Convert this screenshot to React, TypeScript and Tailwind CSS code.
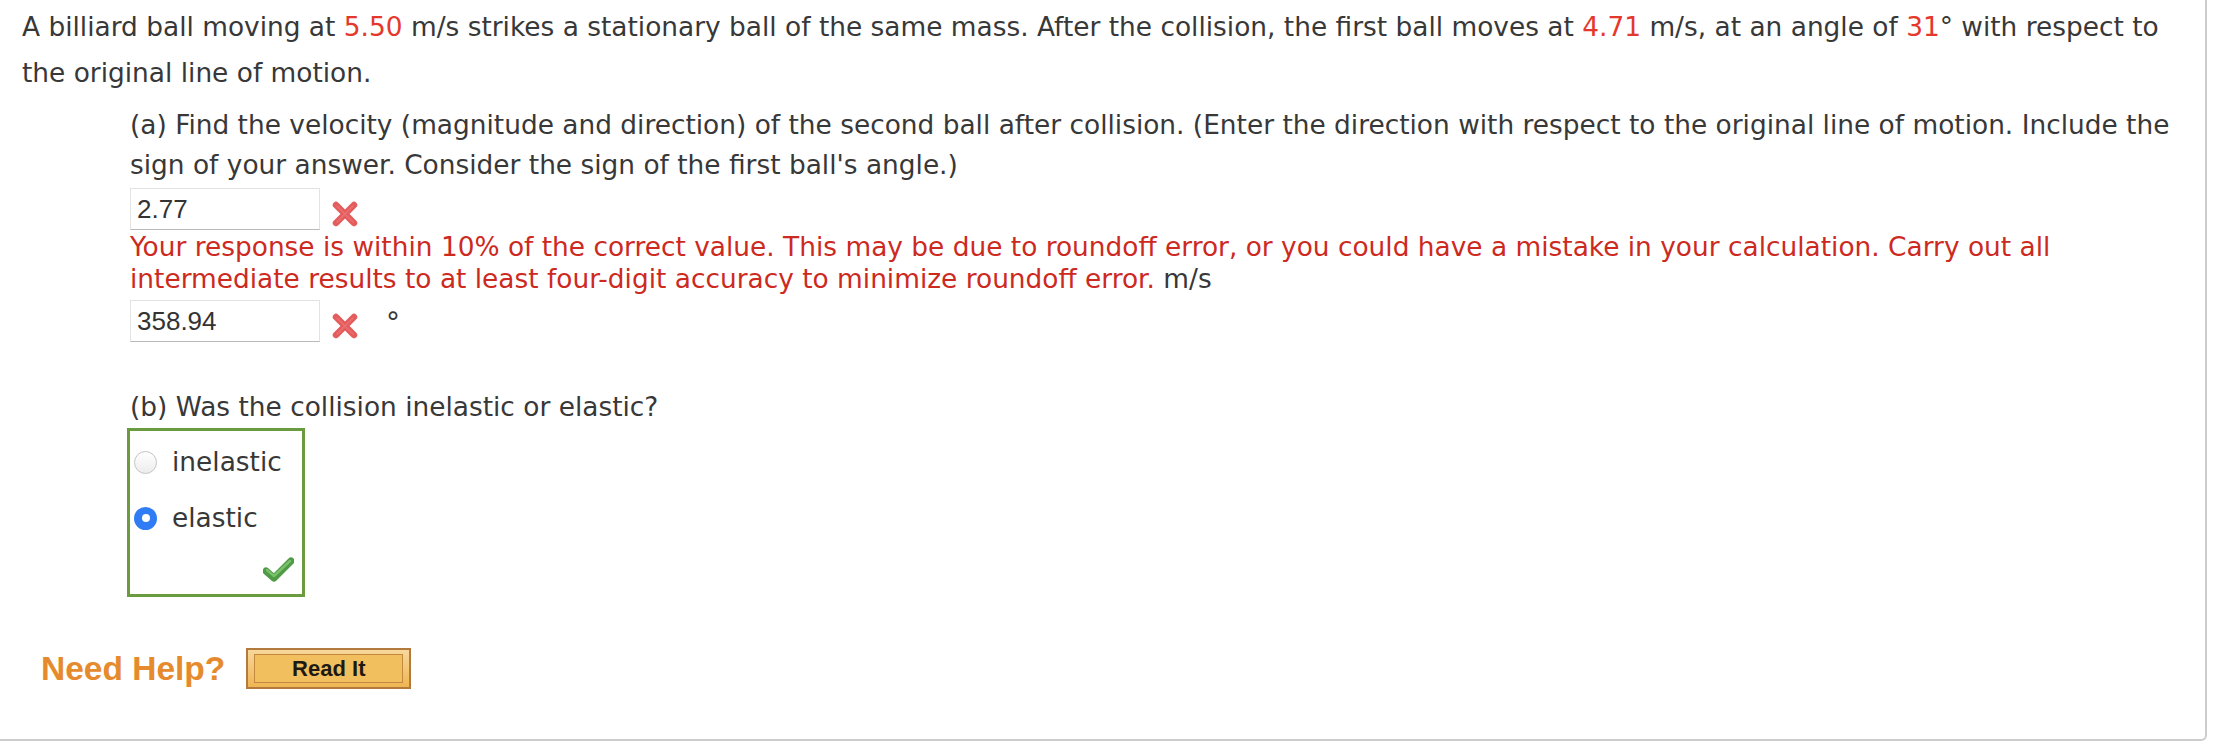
import { FC } from "react";

const XMark: FC = () => (
  <svg width="28" height="26" viewBox="0 0 28 26" className="shrink-0">
    <path
      d="M5 4 L23 22 M23 4 L5 22"
      stroke="#e45c5c"
      strokeWidth="6.5"
      strokeLinecap="round"
    />
    <path
      d="M6 5 L22 21 M22 5 L6 21"
      stroke="#ee8080"
      strokeWidth="1.5"
      strokeLinecap="round"
      opacity="0.6"
    />
  </svg>
);

const CheckMark: FC = () => (
  <svg width="31" height="26" viewBox="0 0 31 26">
    <path
      d="M3 14 L11 21 L28 4"
      fill="none"
      stroke="#4f9a45"
      strokeWidth="7"
      strokeLinecap="round"
      strokeLinejoin="round"
    />
    <path
      d="M4 13 L11 19 L27 4"
      fill="none"
      stroke="#79c06a"
      strokeWidth="2.5"
      strokeLinecap="round"
      strokeLinejoin="round"
    />
  </svg>
);

const AnswerBox: FC<{ value: string }> = ({ value }) => (
  <div className="w-[190px] h-[42px] flex items-center pl-[6px] border border-[#e3e3e3] border-b-[#b9b9b9] bg-white font-['Liberation_Sans',Arial,sans-serif] text-[26px] text-[#333]">
    {value}
  </div>
);

const Radio: FC<{ checked?: boolean }> = ({ checked }) =>
  checked ? (
    <span className="w-[23px] h-[23px] rounded-full bg-[#2f7cf5] flex items-center justify-center shrink-0">
      <span className="w-[8px] h-[8px] rounded-full bg-white" />
    </span>
  ) : (
    <span className="w-[23px] h-[23px] rounded-full border border-[#c4c4c4] bg-gradient-to-b from-white to-[#ececec] shrink-0" />
  );

const Red: FC<{ children: string }> = ({ children }) => (
  <span className="text-[#e5382c]">{children}</span>
);

export default function App() {
  return (
    <div className="w-[2207px] h-[741px] border-r-2 border-b-2 border-[#cccccc] rounded-br-[6px] pl-[22px] pr-[25px] pt-[4px] bg-white font-['DejaVu_Sans',Verdana,sans-serif] text-[26.4px] leading-[40px] text-[#383838]">
      <div className="leading-[46px]">
        <div>
          <span>A billiard ball moving at </span>
          <Red>5.50</Red>
          <span>
            {" "}
            m/s strikes a stationary ball of the same mass. After the
            collision, the first ball moves at{" "}
          </span>
          <Red>4.71</Red>
          <span> m/s, at an angle of </span>
          <Red>31</Red>
          <span>° with respect to</span>
        </div>
        <div>the original line of motion.</div>
      </div>

      <div className="ml-[108px] mt-[9px]">
        <div>
          (a) Find the velocity (magnitude and direction) of the second ball
          after collision. (Enter the direction with respect to the original
          line of motion. Include the
        </div>
        <div>sign of your answer. Consider the sign of the first ball's angle.)</div>

        <div className="flex items-center mt-[3px]">
          <AnswerBox value="2.77" />
          <span className="ml-[11px] mt-[9px]">
            <XMark />
          </span>
        </div>

        <div className="leading-[32px] mt-[1px] text-[#cd2a1f]">
          <div>
            Your response is within 10% of the correct value. This may be due to
            roundoff error, or you could have a mistake in your calculation.
            Carry out all
          </div>
          <div>
            <span>
              intermediate results to at least four-digit accuracy to minimize
              roundoff error.
            </span>{" "}
            <span className="text-[#383838]">m/s</span>
          </div>
        </div>

        <div className="flex items-center mt-[5px]">
          <AnswerBox value="358.94" />
          <span className="ml-[11px] mt-[9px]">
            <XMark />
          </span>
          <span className="ml-[27px] mt-[4px] text-[28px] leading-none">°</span>
        </div>

        <div className="mt-[45px]">(b) Was the collision inelastic or elastic?</div>

        <div className="-ml-[3px] mt-[1px] w-[178px] h-[169px] border-[3px] border-[#6b9b3f] pt-[3px]">
          <div className="h-[56px] flex items-center pl-[4px] gap-[15px]">
            <Radio />
            <span>inelastic</span>
          </div>
          <div className="h-[56px] flex items-center pl-[4px] gap-[15px]">
            <Radio checked />
            <span>elastic</span>
          </div>
          <div className="flex justify-end pr-[8px] mt-[11px]">
            <CheckMark />
          </div>
        </div>
      </div>

      <div className="flex items-center ml-[19px] mt-[51px]">
        <span className="font-['Liberation_Sans',Arial,sans-serif] font-bold text-[33.5px] leading-none text-[#e68a2e]">
          Need Help?
        </span>
        <div className="ml-[21px] w-[165px] h-[41px] border-2 border-[#b27a3c] bg-gradient-to-b from-[#f8d79a] to-[#efb552] px-[6px] py-[4px]">
          <div className="w-full h-full border border-[#c28a3e] bg-[#f2bf5e] flex items-center justify-center font-['Liberation_Sans',Arial,sans-serif] font-bold text-[22px] leading-none text-[#1e1a12]">
            Read It
          </div>
        </div>
      </div>
    </div>
  );
}
